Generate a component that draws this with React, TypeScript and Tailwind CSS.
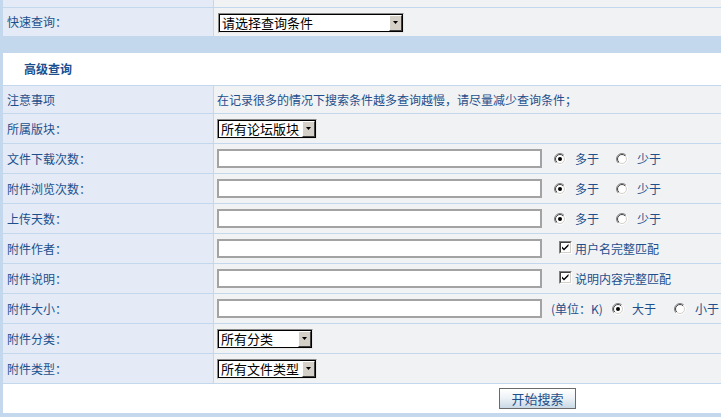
import React from "react";

const LINE = "bg-[#c4d8ed]";

function Radio({ checked }: { checked?: boolean }) {
  return (
    <svg width="12" height="12" viewBox="0 0 12 12" className="shrink-0">
      <defs>
        <linearGradient id="ro" x1="0" y1="0" x2="1" y2="1">
          <stop offset="0.5" stopColor="#808080" />
          <stop offset="0.5" stopColor="#ffffff" />
        </linearGradient>
        <linearGradient id="ri" x1="0" y1="0" x2="1" y2="1">
          <stop offset="0.5" stopColor="#404040" />
          <stop offset="0.5" stopColor="#d4d0c8" />
        </linearGradient>
      </defs>
      <circle cx="6" cy="6" r="5.5" fill="none" stroke="url(#ro)" strokeWidth="1" />
      <circle cx="6" cy="6" r="4.5" fill="#fff" stroke="url(#ri)" strokeWidth="1" />
      {checked && <circle cx="6" cy="6" r="2" fill="#000" />}
    </svg>
  );
}

function Checkbox() {
  return (
    <span className="relative inline-block w-[13px] h-[13px] shrink-0 border border-t-[#808080] border-l-[#808080] border-r-white border-b-white">
      <span className="absolute inset-0 bg-white border border-t-[#404040] border-l-[#404040] border-r-[#d4d0c8] border-b-[#d4d0c8]">
        <svg width="9" height="9" viewBox="0 0 9 9" className="absolute left-0 top-0">
          <path d="M1 3.5 L3 5.5 L7.5 1 L7.5 3 L3 7.5 L1 5.5 Z" fill="#000" />
        </svg>
      </span>
    </span>
  );
}

function Select({ label, width }: { label: string; width: number }) {
  return (
    <div
      className="h-[20px] flex border border-t-[#8a8a8a] border-l-[#8a8a8a] border-r-[#e8e8e8] border-b-[#e8e8e8]"
      style={{ width }}
    >
      <div className="flex-1 flex border border-black bg-white">
        <span className="flex-1 flex items-center pl-[2px] text-[13px] leading-[15px] text-black whitespace-nowrap">
          {label}
        </span>
        <span className="w-[13px] h-full bg-[#d4d0c8] border border-t-white border-l-white border-r-[#404040] border-b-[#404040] flex items-center justify-center">
          <svg width="5" height="3" viewBox="0 0 5 3">
            <path d="M0 0 H5 L2.5 3 Z" fill="#000" />
          </svg>
        </span>
      </div>
    </div>
  );
}

function TextInput() {
  return <div className="w-[325px] h-[19px] bg-white border-2 border-[#a3a3a3]" />;
}

function Row({
  label,
  h,
  children,
}: {
  label: string;
  h: string;
  children?: React.ReactNode;
}) {
  return (
    <div className={`flex gap-px ${h}`}>
      <div className="w-[210px] shrink-0 bg-[#e4ebf7] flex items-center pl-[4px] text-[12px] text-[#1d4f8c]">
        {label}
      </div>
      <div className="flex-1 bg-[#f1f2f4] flex items-center pl-[3px] text-[12px] text-[#1d4f8c]">
        {children}
      </div>
    </div>
  );
}

function MoreLess() {
  return (
    <div className="flex items-center ml-[12px]">
      <Radio checked />
      <span className="ml-[9px]">多于</span>
      <span className="ml-[17px]">
        <Radio />
      </span>
      <span className="ml-[9px]">少于</span>
    </div>
  );
}

export default function App() {
  return (
    <div
      className={`w-[721px] h-[417px] overflow-hidden ${LINE} pl-[3px] flex flex-col gap-px font-['Noto_Sans_CJK_SC','Liberation_Sans',sans-serif]`}
    >
      <Row label="" h="h-[7px]" />
      <Row label="快速查询：" h="h-[28px]">
        <div className="ml-[1px] mt-[1px]">
          <Select label="请选择查询条件" width={186} />
        </div>
      </Row>
      <div className="h-[15px] shrink-0" />
      <div className="h-[32px] shrink-0 bg-white flex items-center pl-[21px] text-[12px] font-bold text-[#1b4f8e]">
        高级查询
      </div>
      <Row label="注意事项" h="h-[27px]">
        在记录很多的情况下搜索条件越多查询越慢，请尽量减少查询条件；
      </Row>
      <Row label="所属版块：" h="h-[29px]">
        <Select label="所有论坛版块" width={100} />
      </Row>
      <Row label="文件下载次数：" h="h-[29px]">
        <TextInput />
        <MoreLess />
      </Row>
      <Row label="附件浏览次数：" h="h-[29px]">
        <TextInput />
        <MoreLess />
      </Row>
      <Row label="上传天数：" h="h-[29px]">
        <TextInput />
        <MoreLess />
      </Row>
      <Row label="附件作者：" h="h-[29px]">
        <TextInput />
        <span className="ml-[17px]">
          <Checkbox />
        </span>
        <span className="ml-[3px]">用户名完整匹配</span>
      </Row>
      <Row label="附件说明：" h="h-[29px]">
        <TextInput />
        <span className="ml-[17px]">
          <Checkbox />
        </span>
        <span className="ml-[3px]">说明内容完整匹配</span>
      </Row>
      <Row label="附件大小：" h="h-[29px]">
        <TextInput />
        <span className="ml-[9px] whitespace-nowrap">(单位：K)</span>
        <span className="ml-[9px]">
          <Radio checked />
        </span>
        <span className="ml-[8px] whitespace-nowrap">大于</span>
        <span className="ml-[18px]">
          <Radio />
        </span>
        <span className="ml-[9px] whitespace-nowrap">小于</span>
      </Row>
      <Row label="附件分类：" h="h-[29px]">
        <Select label="所有分类" width={96} />
      </Row>
      <Row label="附件类型：" h="h-[29px]">
        <Select label="所有文件类型" width={100} />
      </Row>
      <div className="h-[29px] shrink-0 bg-white flex items-center pl-[496px]">
        <button className="w-[77px] h-[21px] border border-[#6a6a6a] bg-[linear-gradient(#ffffff_0%,#eef3f7_45%,#c9d9e5_100%)] text-[13px] leading-[17px] text-[#1d4f8c]">
          开始搜索
        </button>
      </div>
    </div>
  );
}
